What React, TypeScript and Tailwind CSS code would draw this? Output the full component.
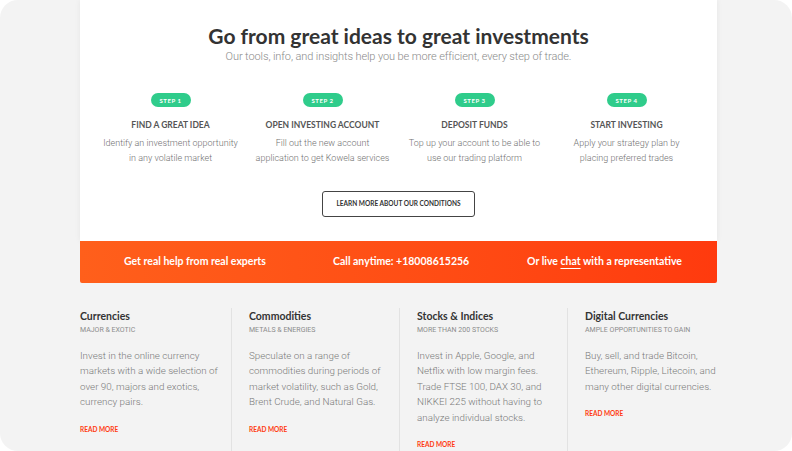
import React from "react";

const steps = [
  { n: "STEP 1", t: "FIND A GREAT IDEA", d: ["Identify an investment opportunity", "in any volatile market"] },
  { n: "STEP 2", t: "OPEN INVESTING ACCOUNT", d: ["Fill out the new account", "application to get Kowela services"] },
  { n: "STEP 3", t: "DEPOSIT FUNDS", d: ["Top up your account to be able to", "use our trading platform"] },
  { n: "STEP 4", t: "START INVESTING", d: ["Apply your strategy plan by", "placing preferred trades"] },
];

const markets = [
  { t: "Currencies", s: "MAJOR & EXOTIC", d: ["Invest in the online currency", "markets with a wide selection of", "over 90, majors and exotics,", "currency pairs."] },
  { t: "Commodities", s: "METALS & ENERGIES", d: ["Speculate on a range of", "commodities during periods of", "market volatility, such as Gold,", "Brent Crude, and Natural Gas."] },
  { t: "Stocks & Indices", s: "MORE THAN 200 STOCKS", d: ["Invest in Apple, Google, and", "Netflix with low margin fees.", "Trade FTSE 100, DAX 30, and", "NIKKEI 225 without having to", "analyze individual stocks."] },
  { t: "Digital Currencies", s: "AMPLE OPPORTUNITIES TO GAIN", d: ["Buy, sell, and trade Bitcoin,", "Ethereum, Ripple, Litecoin, and", "many other digital currencies."] },
];

export default function App() {
  return (
    <div className="w-[792px] h-[451px] bg-white overflow-hidden">
      <div className="w-full h-full rounded-[18px] bg-[#f3f3f3] overflow-hidden flex flex-col items-start">
        <div className="ml-[80px] w-[637px] bg-white shadow-[0_0_6px_rgba(0,0,0,0.06)] flex flex-col items-center">
          <h1 className="font-['Lato',sans-serif] mt-[22px] text-[21px] leading-[28px] font-bold text-[#333]">
            Go from great ideas to great investments
          </h1>
          <p className="font-['Roboto',sans-serif] mt-0 text-[11px] leading-[14px] font-light text-[#8a8a8a] tracking-[-0.1px]">
            Our tools, info, and insights help you be more efficient, every step of trade.
          </p>
          <div className="mt-[29px] grid grid-cols-4 w-[608px]">
            {steps.map((s) => (
              <div key={s.n} className="flex flex-col items-center">
                <div className="font-['Lato',sans-serif] w-[40px] h-[14px] rounded-full bg-[#2fcc8b] text-white text-[6px] font-bold flex items-center justify-center tracking-[0.5px]">
                  {s.n}
                </div>
                <div className="font-['Lato',sans-serif] mt-[12px] text-[8.5px] leading-[12px] font-bold text-[#555]">
                  {s.t}
                </div>
                <div className="font-['Roboto',sans-serif] mt-[5px] text-[9px] leading-[15px] font-light text-[#727272] text-center">
                  {s.d.map((l) => (
                    <div key={l}>{l}</div>
                  ))}
                </div>
              </div>
            ))}
          </div>
          <div className="font-['Lato',sans-serif] mt-[25px] mb-[24px] w-[153px] h-[26px] border-[1.5px] border-[#444] rounded-[3px] flex items-center justify-center text-[6.5px] font-bold text-[#333]">
            LEARN MORE ABOUT OUR CONDITIONS
          </div>
        </div>
        <div className="font-['Lato',sans-serif] ml-[80px] w-[637px] h-[42px] rounded-b-[2px] bg-gradient-to-r from-[#ff5f1b] to-[#ff3a0e] flex items-center pl-[44px] text-white text-[10.5px] font-bold">
          <span className="w-[209px]">Get real help from real experts</span>
          <span className="w-[194px]">Call anytime: +18008615256</span>
          <span>
            Or live <span className="underline underline-offset-[3px] decoration-[0.5px]">chat</span> with a representative
          </span>
        </div>
        <div className="ml-[63px] mt-[25px] w-[672px] grid grid-cols-4 flex-1">
          {markets.map((m, i) => (
            <div key={m.t} className={i > 0 ? "pl-[17px] pr-[6px] border-l border-[#e2e2e2]" : "pl-[17px] pr-[6px]"}>
              <div className="font-['Lato',sans-serif] mt-[1px] text-[10.5px] leading-[14px] font-bold text-[#333]">
                {m.t}
              </div>
              <div className="font-['Roboto',sans-serif] mt-[2px] text-[7px] leading-[10px] text-[#8c8c8c]">
                {m.s}
              </div>
              <div className="font-['Roboto',sans-serif] mt-[13px] text-[9.8px] leading-[15.4px] font-light text-[#7a7a7a]">
                {m.d.map((l) => (
                  <div key={l}>{l}</div>
                ))}
              </div>
              <div className="font-['Lato',sans-serif] mt-[15px] text-[6.5px] font-bold text-[#ff3a10]">
                READ MORE
              </div>
            </div>
          ))}
        </div>
      </div>
    </div>
  );
}
